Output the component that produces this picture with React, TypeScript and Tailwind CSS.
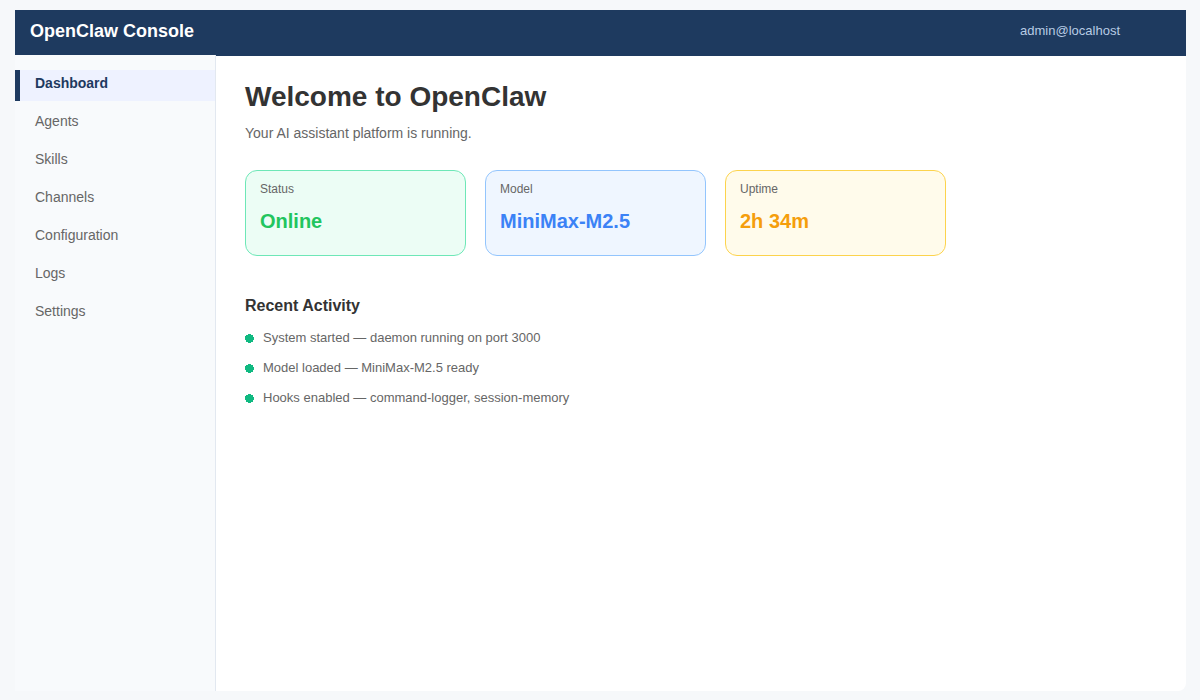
const navItems = ["Dashboard", "Agents", "Skills", "Channels", "Configuration", "Logs", "Settings"];

const activity = [
  "System started — daemon running on port 3000",
  "Model loaded — MiniMax-M2.5 ready",
  "Hooks enabled — command-logger, session-memory",
];

const stats = [
  { label: "Status", value: "Online", box: "bg-[#ecfdf5] border-[#6ee7b7]", text: "text-[#22c55e]" },
  { label: "Model", value: "MiniMax-M2.5", box: "bg-[#eff6ff] border-[#93c5fd]", text: "text-[#3b82f6]" },
  { label: "Uptime", value: "2h 34m", box: "bg-[#fffbeb] border-[#fcd34d]", text: "text-[#f59e0b]" },
];

const App = () => {
  return (
    <div className="h-[700px] overflow-hidden bg-[#f6f8fa] pt-[10px] pl-[15px] pr-[14px] pb-[9px] font-['Liberation_Sans',Arial,sans-serif]">
      <div className="flex h-full flex-col overflow-hidden rounded-br-lg bg-white">
        {/* Top bar */}
        <header className="flex h-[46px] shrink-0 items-center justify-between bg-[#1e3a5f] pb-[4px] pl-[15px] pr-[66px]">
          <span className="text-[18px] font-bold text-white">OpenClaw Console</span>
          <span className="text-[13px] text-[#b8cce4]">admin@localhost</span>
        </header>

        <div className="flex min-h-0 flex-1">
          <nav className="relative -mt-px w-[201px] shrink-0 border-r border-[#e2e8f0] bg-[#f8fafc] pt-[15px]">
            {navItems.map((item, index) =>
              index === 0 ? (
                <div
                  key={item}
                  className="mb-[7px] flex h-[31px] items-center border-l-[5px] border-[#1e3a5f] bg-[#eef2ff] pb-[4px] pl-[15px] text-[14px] font-bold text-[#1e3a5f]"
                >
                  {item}
                </div>
              ) : (
                <div key={item} className="mb-[7px] flex h-[31px] items-center pb-[4px] pl-[20px] text-[14px] text-[#666666]">
                  {item}
                </div>
              )
            )}
          </nav>

          <main className="flex-1 pl-[29px] pt-[25px]">
            <h1 className="text-[28px] font-bold leading-[32px] text-[#333333]">Welcome to OpenClaw</h1>
            <p className="mt-[12px] text-[14px] leading-[16px] text-[#666666]">Your AI assistant platform is running.</p>

            <div className="mt-[29px] flex gap-[19px]">
              {stats.map((stat) => (
                <div key={stat.label} className={`h-[86px] w-[221px] rounded-[12px] border px-[14px] pt-[11px] ${stat.box}`}>
                  <div className="text-[12px] leading-[14px] text-[#666666]">{stat.label}</div>
                  <div className={`mt-[14px] text-[20px] font-bold leading-[23px] ${stat.text}`}>{stat.value}</div>
                </div>
              ))}
            </div>

            <h2 className="mt-[41px] text-[16px] font-bold leading-[18px] text-[#333333]">Recent Activity</h2>
            <ul className="mt-[8px]">
              {activity.map((line) => (
                <li key={line} className="flex h-[30px] items-center gap-[9px] text-[13px] text-[#666666]">
                  <svg width="9" height="9" viewBox="0 0 9 9" className="shrink-0" shapeRendering="crispEdges">
                    <circle cx="4.5" cy="4.5" r="4.5" fill="#10b981" />
                  </svg>
                  {line}
                </li>
              ))}
            </ul>
          </main>
        </div>
      </div>
    </div>
  );
};

export default App;
